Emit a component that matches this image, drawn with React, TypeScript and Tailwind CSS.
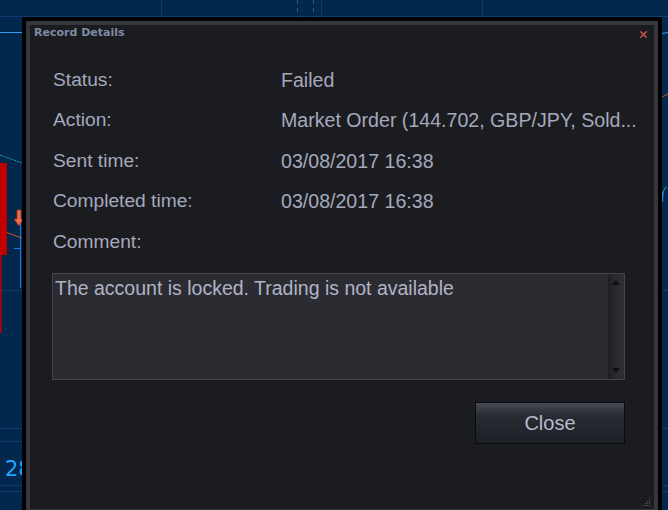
import { X } from "lucide-react";

const details = [
  { label: "Status:", value: "Failed" },
  { label: "Action:", value: "Market Order (144.702, GBP/JPY, Sold..." },
  { label: "Sent time:", value: "03/08/2017 16:38" },
  { label: "Completed time:", value: "03/08/2017 16:38" },
  { label: "Comment:", value: "" },
];

// chart behind the dialog: grid, a candle, markers and price lines
function ChartBackdrop() {
  return (
    <svg className="absolute inset-0" width={668} height={510} viewBox="0 0 668 510">
      <rect width={668} height={510} fill="#02284d" />
      <g stroke="#0d3d6e" strokeWidth={1}>
        <line x1={161.5} y1={0} x2={161.5} y2={17} />
        <line x1={321.5} y1={0} x2={321.5} y2={17} />
        <line x1={482.5} y1={0} x2={482.5} y2={17} />
        <line x1={0} y1={16.5} x2={668} y2={16.5} />
        <line x1={0} y1={290.5} x2={668} y2={290.5} />
        <line x1={0} y1={428.5} x2={668} y2={428.5} />
        <line x1={0} y1={485.5} x2={668} y2={485.5} />
        <line x1={0} y1={491.5} x2={668} y2={491.5} />
        <line x1={0} y1={441.5} x2={22} y2={441.5} />
      </g>
      <g stroke="#1b5c9c" strokeWidth={1} strokeDasharray="4 4">
        <line x1={297.5} y1={0} x2={297.5} y2={17} />
        <line x1={313.5} y1={0} x2={313.5} y2={17} />
      </g>
      <line x1={0} y1={32.5} x2={22} y2={32.5} stroke="#3a9bf0" />
      <line x1={662} y1={33.5} x2={668} y2={32.5} stroke="#3a9bf0" />
      <line x1={0} y1={155} x2={22} y2={163} stroke="#1fa7a7" strokeDasharray="2 1" />
      <line x1={0} y1={230} x2={22} y2={238} stroke="#d0581a" />
      <line x1={662} y1={97} x2={668} y2={94} stroke="#d0581a" />
      <path d="M662.5 198 Q663 188 667 187" stroke="#1fa7a7" fill="none" />
      <line x1={662.5} y1={192} x2={662.5} y2={202} stroke="#2a7ad8" strokeWidth={1.5} />
      <rect x={0} y={163} width={7} height={92} fill="#c00000" />
      <rect x={0} y={255} width={1.5} height={78} fill="#c00000" />
      <line x1={20.5} y1={218} x2={20.5} y2={288} stroke="#1a78e8" />
      <line x1={14} y1={248.5} x2={21} y2={248.5} stroke="#1a78e8" />
      <path d="M17 210 h4 v9 h2 l-4 7 l-5 -7 h3 z" fill="#e8704a" stroke="#b02a1a" strokeWidth={0.8} />
      <text x={5} y={476} fill="#22a4ff" fontSize={21} fontFamily="'DejaVu Sans', sans-serif">
        28
      </text>
    </svg>
  );
}

function ResizeGrip() {
  const dots: [number, number][] = [];
  for (let r = 0; r < 4; r++) {
    for (let c = 3 - r; c < 4; c++) dots.push([c * 2 + 1, r * 2 + 1]);
  }
  return (
    <svg width={9} height={9} className="absolute right-[3px] bottom-[2px]">
      {dots.map(([x, y]) => (
        <rect key={`${x}-${y}`} x={x} y={y} width={1} height={1} fill="#5c5e66" />
      ))}
    </svg>
  );
}

export default function App() {
  return (
    <div className="relative w-[668px] h-[510px] overflow-hidden bg-[#02284d] font-['Liberation_Sans',Arial,sans-serif]">
      <ChartBackdrop />

      <div className="absolute left-[22px] top-[17px] w-[640px] h-[500px] border-4 border-black">
        <div className="h-full border-4 border-[#36373c]">
          <div className="relative h-full bg-[#1b1c20]">
            <div className="h-[17px] pl-[4px] pr-[5px] flex items-center justify-between">
              <span className="text-[11px] font-bold text-[#7f8aa6] font-['DejaVu_Sans',sans-serif]">
                Record Details
              </span>
              <X size={11} strokeWidth={3.4} className="text-[#c8504f] mt-[2px]" />
            </div>

            <div className="pl-[23px] pr-[30px] pt-[18px]">
              <div className="flex flex-col">
                {details.map((d) => (
                  <div key={d.label} className="flex h-[40.5px] items-center text-[#a6a8bd]">
                    <span className="w-[228px] shrink-0 text-[19.2px]">{d.label}</span>
                    <span className="whitespace-nowrap text-[19.6px]">{d.value}</span>
                  </div>
                ))}
              </div>

              <div className="mt-[10px] ml-[-1px] h-[107px] w-[573px] flex border border-[#45464d] bg-[#2b2c32]">
                <p className="flex-1 pl-[2px] pt-[2px] text-[19.5px] leading-[24px] text-[#b2b3c7]">
                  The account is locked. Trading is not available
                </p>
                <div className="w-[16px] flex flex-col items-center justify-between py-[6px] bg-gradient-to-r from-[#1e1f24] via-[#2a2b31] to-[#2e2f35]">
                  <svg width={8} height={5}>
                    <path d="M4 0 L8 5 L0 5 Z" fill="#101115" />
                  </svg>
                  <svg width={8} height={5}>
                    <path d="M0 0 L8 0 L4 5 Z" fill="#101115" />
                  </svg>
                </div>
              </div>

              <div className="mt-[22px] flex justify-end">
                <button className="mr-[-1px] w-[150px] h-[42px] border border-[#0b0b0d] bg-gradient-to-b from-[#4a4c55] via-[#2a2c33] via-30% to-[#1d1f26] text-[20px] text-[#b6bbcd]">
                  Close
                </button>
              </div>
            </div>

            <ResizeGrip />
          </div>
        </div>
      </div>
    </div>
  );
}
